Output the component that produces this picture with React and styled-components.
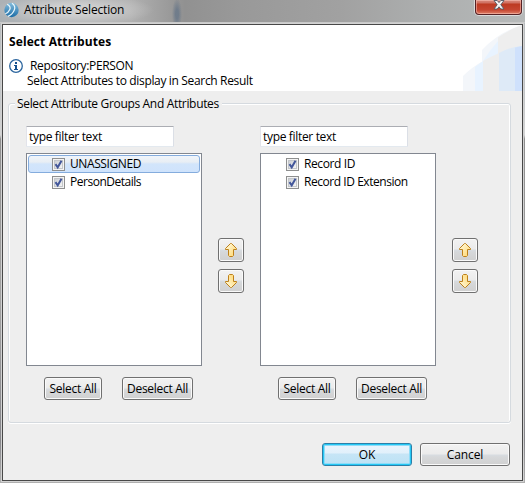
import React from "react";
import styled, { createGlobalStyle } from "styled-components";

const Global = createGlobalStyle`
  * { box-sizing: border-box; }
  body {
    margin: 0;
    font-family: "Open Sans", "Noto Sans", sans-serif;
    font-size: 12px;
    color: #000;
    overflow: hidden;
  }
`;

const Frame = styled.div`
  width: 525px;
  height: 483px;
  display: flex;
  flex-direction: column;
  padding: 0 2px 2px 1px;
  background: linear-gradient(to bottom, #b5b9bb 0, #c4c7c9 100px, #d5d5d5 135px, #8f8f8f 139px, #a3a3a3 300px, #85858a 440px, #b0b0b0 100%);
`;

const TitleBar = styled.header`
  height: 23px;
  margin: 0 -2px 0 -1px;
  padding: 0 3px 0 4px;
  display: flex;
  align-items: flex-start;
  border-bottom: 1px solid #c9c9c9;
  background:
    radial-gradient(ellipse 5px 16px at 177px 14px, rgba(106, 120, 137, 0.85) 30%, transparent 100%),
    radial-gradient(ellipse 80px 16px at 74px 10px, rgba(215, 215, 215, 0.8) 30%, transparent 100%),
    linear-gradient(to right, #acb1b5 0, #b1b1b1 130px, #919191 185px, #999 240px, #a1a1a1 340px, #adafaf 430px, #b6b9b9 100%);
`;

const Logo = styled.svg`
  margin: 2px 5px 0 0;
  flex: none;
`;

const Text = styled.span`
  font-weight: ${(p) => (p.$bold ? 700 : 400)};
  letter-spacing: ${(p) => p.$track || 0}px;
  line-height: ${(p) => p.$line || 16}px;
  white-space: nowrap;
`;

const Caption = styled(Text)`
  margin-top: 2px;
`;

const CloseButton = styled.button`
  width: 47px;
  height: 15px;
  margin-left: auto;
  padding: 0;
  display: flex;
  justify-content: center;
  border: 1px solid #552124;
  border-top: 0;
  border-radius: 0 0 4px 4px;
  background: linear-gradient(to bottom, #d98b7e 0, #cf6f60 3px, #bd3a22 4px, #c64631 10px, #df8068 100%);
  box-shadow: inset 0 0 0 1px rgba(255, 205, 195, 0.5), 0 0 0 1px rgba(235, 235, 235, 0.7);
`;

const Client = styled.main`
  flex: 1;
  width: 521px;
  margin: 1px 0 0 1px;
  display: flex;
  flex-direction: column;
  border: 1px solid #484848;
  background: #eee;
  box-shadow: 0 0 0 1px #d2d2d2;
`;

const Header = styled.section`
  height: 66px;
  flex: none;
  display: flex;
  justify-content: space-between;
  background: #fff;
`;

const HeaderText = styled.div`
  padding: 9px 0 0 6px;
  display: flex;
  flex-direction: column;
`;

const InfoRow = styled.div`
  display: grid;
  grid-template-columns: 14px auto;
  column-gap: 7px;
  align-items: center;
  margin-top: 9px;
  height: 14px;
`;

const HeaderNote = styled.div`
  display: flex;
  padding: 1px 0 0 18px;
`;

const Group = styled.section`
  position: relative;
  width: 503px;
  height: 320px;
  margin: 12px 0 0 5px;
  padding: 22px 0 0 17px;
  display: flex;
  align-items: flex-start;
  border: 1px solid #d5dadf;
  border-radius: 3px;
  box-shadow: inset 1px 1px 0 #fff, inset -1px 0 0 #fff, 0 1px 0 #fff;
`;

const Legend = styled.div`
  position: absolute;
  top: -8px;
  left: 6px;
  width: 207px;
  height: 16px;
  padding-left: 2px;
  line-height: 16px;
  background: #eee;
`;

const Column = styled.div`
  width: 176px;
`;

const Filter = styled.div`
  width: 148px;
  height: 21px;
  padding: 2px 0 0 2px;
  border: 1px solid;
  border-color: #abadb3 #dbdfe6 #e3e9ef #e2e3ea;
  border-radius: 1px;
  line-height: 16px;
  background: #fff;
`;

const List = styled.div`
  height: 213px;
  margin-top: 6px;
  padding: 1px;
  border: 1px solid #828790;
  background: #fff;
`;

const Row = styled.div`
  height: 18px;
  padding-left: 23px;
  display: flex;
  align-items: center;
  gap: 5px;
  border: 1px solid ${(p) => (p.$selected ? "#84acdd" : "transparent")};
  border-radius: 3px;
  background: ${(p) => (p.$selected ? "linear-gradient(to bottom, #f0f5fb 0, #e8eef4 6px, #d2e5fb 8px, #cfe3fc 100%)" : "none")};
`;

const Check = styled.svg`
  flex: none;
`;

const Actions = styled.div`
  margin-top: 11px;
  padding-left: 18px;
  display: flex;
  gap: 20px;
`;

const Mover = styled.div`
  width: 58px;
  padding: 112px 0 0 16px;
  display: flex;
  flex-direction: column;
  gap: 7px;
`;

const Button = styled.button`
  width: ${(p) => p.$width}px;
  height: ${(p) => p.$height || 23}px;
  padding: 0;
  display: flex;
  align-items: center;
  justify-content: center;
  font-family: inherit;
  font-size: 12px;
  color: #000;
  border: 1px solid ${(p) => (p.$primary ? "#2c7fa8" : "#707070")};
  border-radius: 3px;
  background: ${(p) =>
    p.$primary
      ? "linear-gradient(to bottom, #eaf4fc 0, #e1f0fb 9px, #c6e5f6 10px, #bce2f5 100%)"
      : "linear-gradient(to bottom, #f2f2f2 0, #ebebeb 10px, #d7dce1 11px, #d6d8da 13px, #d0d0d0 100%)"};
  box-shadow: ${(p) => (p.$primary ? "inset 0 0 0 1px #24c8f5, inset 0 0 0 2px #8fdcf8" : "inset 0 0 0 1px #fafafa")};
`;

const Footer = styled.footer`
  display: flex;
  justify-content: flex-end;
  gap: 8px;
  padding: 20px 12px 0 0;
`;

function Swoosh() {
  return (
    <svg width="60" height="66" viewBox="462 25 60 66">
      <path d="M482 91V50Q499 32 522 25V91Z" fill="#f3f6fa" />
      <path d="M483 61Q490 50 498 41V54Z" fill="#e8f3ff" />
      <path d="M498 91V37.500Q510 29 522 25V91Z" fill="#eee" />
      <path d="M463 91V76Q472 67 483 61V91Z" fill="#f3f6fa" />
      <path d="M475 91V67L483 61V91Z" fill="#e8f3ff" />
      <path d="M483 91V61Q490 57 499 53V91Z" fill="#eee" />
      <path d="M499 91V53Q510 47 522 46V91Z" fill="#deeaf7" />
      <path d="M515 91V47.500L522 46V91Z" fill="#cfe1fc" />
    </svg>
  );
}

function InfoIcon() {
  return (
    <svg width="14" height="14" viewBox="0 0 14 14">
      <circle cx="7" cy="7" r="6.300" fill="#fff" stroke="#2b659e" strokeWidth="1.300" />
      <path d="M6 3h2v2H6zM5 6h3v4h1v1H5v-1h1V7H5z" fill="#17528f" />
    </svg>
  );
}

function CheckBox() {
  return (
    <Check width="13" height="13" viewBox="0 0 13 13">
      <defs>
        <linearGradient id="well" x1="0" y1="0" x2="1" y2="1">
          <stop offset="0" stopColor="#c9cdd2" />
          <stop offset="1" stopColor="#f7f7f7" />
        </linearGradient>
      </defs>
      <rect x="0.500" y="0.500" width="12" height="12" fill="#f4f4f4" stroke="#8e8f8f" />
      <rect x="2.500" y="2.500" width="8" height="8" fill="url(#well)" stroke="#c3c6ca" />
      <path d="M3.500 6.200L5.700 9.300L9.500 2.800" fill="none" stroke="#42569a" strokeWidth="2" />
    </Check>
  );
}

function Arrow({ down }) {
  return (
    <svg width="12" height="14" viewBox="0 0 12 14">
      <defs>
        <linearGradient id="gold" x1="0" y1="0" x2="1" y2="1">
          <stop offset="0" stopColor="#fffbe2" />
          <stop offset="1" stopColor="#ffd568" />
        </linearGradient>
      </defs>
      <path
        d="M5.500 0.500h1L11.500 5.500V6.500H8.500V12.500L7.500 13.500H4.500L3.500 12.500V6.500H0.500V5.500Z"
        transform={down ? "matrix(1 0 0 -1 0 14)" : undefined}
        fill="url(#gold)"
        stroke="#bd801b"
      />
    </svg>
  );
}

function MoveButtons() {
  return (
    <Mover>
      <Button $width={26} $height={24} aria-label="Up"><Arrow /></Button>
      <Button $width={26} $height={24} aria-label="Down"><Arrow down /></Button>
    </Mover>
  );
}

function Picker({ items }) {
  return (
    <Column>
      <Filter><Text $track={-0.33}>type filter text</Text></Filter>
      <List>
        {items.map((it) => (
          <Row key={it.label} $selected={it.selected}>
            <CheckBox />
            <Text $track={it.track}>{it.label}</Text>
          </Row>
        ))}
      </List>
      <Actions>
        <Button $width={58}><Text $track={-0.3}>Select All</Text></Button>
        <Button $width={71}><Text $track={-0.3}>Deselect All</Text></Button>
      </Actions>
    </Column>
  );
}

const groups = [
  { label: "UNASSIGNED", track: -0.4, selected: true },
  { label: "PersonDetails", track: -0.48 },
];

const attributes = [
  { label: "Record ID", track: -0.4 },
  { label: "Record ID Extension", track: -0.45 },
];

export default function App() {
  return (
    <>
      <Global />
      <Frame>
        <TitleBar>
          <Logo width="15" height="16" viewBox="0 0 15 16">
            <defs>
              <linearGradient id="orb" x1="0" y1="0" x2="0" y2="1">
                <stop offset="0" stopColor="#83bcdc" />
                <stop offset="1" stopColor="#1c6da7" />
              </linearGradient>
            </defs>
            <circle cx="7.500" cy="8" r="7.200" fill="url(#orb)" />
            <path d="M3.200 2.200Q7.200 4.500 5.800 7.500Q4.500 10.500 1.300 11.800M8 1.200Q12 4 10.300 8Q8.500 12.500 4 14.400" fill="none" stroke="#e9f6fc" strokeWidth="1.200" />
          </Logo>
          <Caption $track={-0.18}>Attribute Selection</Caption>
          <CloseButton aria-label="Close">
            <svg width="12" height="10" viewBox="0 0 12 10">
              <path d="M1 0.500H4.200L6 2.600L7.800 0.500H11L7.800 4.700L11 9H7.800L6 6.800L4.200 9H1L4.200 4.700Z" fill="#f5f5f5" stroke="#505967" strokeWidth="0.900" />
            </svg>
          </CloseButton>
        </TitleBar>
        <Client>
          <Header>
            <HeaderText>
              <Text $bold $track={0.1}>Select Attributes</Text>
              <InfoRow>
                <InfoIcon />
                <Text $line={14} $track={-0.36}>Repository:PERSON</Text>
              </InfoRow>
              <HeaderNote><Text $line={14} $track={-0.34}>Select Attributes to display in Search Result</Text></HeaderNote>
            </HeaderText>
            <Swoosh />
          </Header>
          <Group>
            <Legend><Text $track={-0.33}>Select Attribute Groups And Attributes</Text></Legend>
            <Picker items={groups} />
            <MoveButtons />
            <Picker items={attributes} />
            <MoveButtons />
          </Group>
          <Footer>
            <Button $width={90} $primary><Text>OK</Text></Button>
            <Button $width={90}><Text $track={-0.1}>Cancel</Text></Button>
          </Footer>
        </Client>
      </Frame>
    </>
  );
}
